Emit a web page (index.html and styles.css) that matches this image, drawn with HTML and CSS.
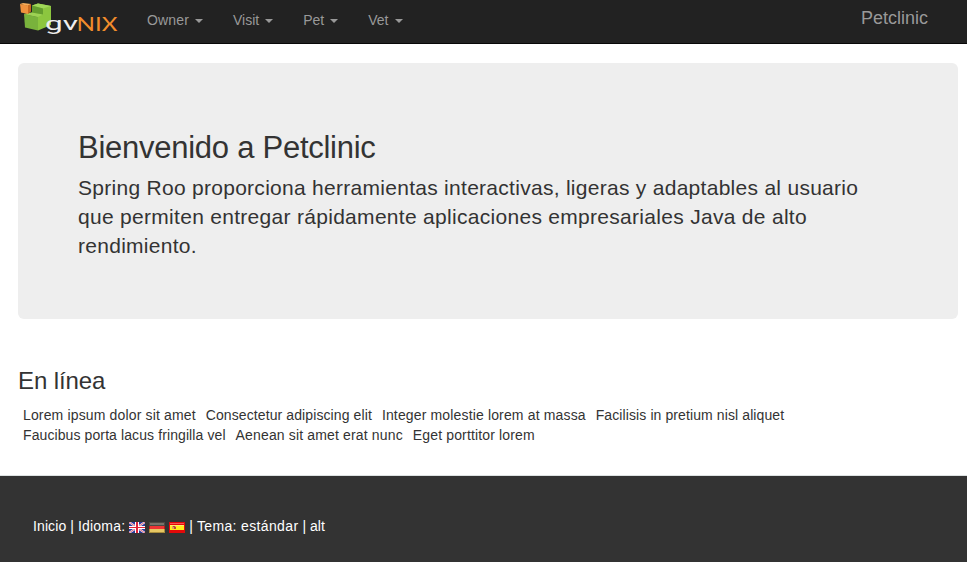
FILE: index.html
```html
<!DOCTYPE html>
<html lang="es">
<head>
<meta charset="utf-8">
<title>Petclinic</title>
<link rel="stylesheet" href="styles.css">
</head>
<body>
<header class="navbar">
  <a class="logo" aria-label="gvNIX">
    <svg width="98" height="36" viewBox="0 0 98 36">
      <path fill="#79b23c" d="M4 14 18 17V30.500L5 27.500Z"/>
      <path fill="#8cc63f" d="M4 14 12 12.500V5.500L18 3.500 31 6V25L18 30.500V17Z"/>
      <path fill="#a0d659" d="M12 5.500 18 3.500 31 6 23 8.500Z"/>
      <path fill="#9dd154" d="M4 14 12 12.500 23 14.500 18 17Z"/>
      <path fill="#649d2e" d="M12 5.500 23 8.500V14.500L12 12.500Z"/>
      <path fill="#f6ad5b" d="M0 4 3 3 11 4 8 6Z"/>
      <path fill="#f0913d" d="M0 4 8 5.500V14L1 12.500Z"/>
      <path fill="#c9691f" d="M8 5.500 11 4V11.500L8 14Z"/>
      <text class="mark mark-light" x="25" y="30" textLength="33" lengthAdjust="spacingAndGlyphs">gv</text>
      <text class="mark mark-orange" x="56.500" y="30.500" textLength="41" lengthAdjust="spacingAndGlyphs">NIX</text>
    </svg>
  </a>
  <nav class="menu">
    <a>Owner<span class="caret"></span></a>
    <a>Visit<span class="caret"></span></a>
    <a>Pet<span class="caret"></span></a>
    <a>Vet<span class="caret"></span></a>
  </nav>
  <a class="brand">Petclinic</a>
</header>
<main class="content">
  <section class="jumbotron">
    <h1>Bienvenido a Petclinic</h1>
    <p><span class="line">Spring Roo proporciona herramientas interactivas, ligeras y adaptables al usuario</span> <span class="line">que permiten entregar rápidamente aplicaciones empresariales Java de alto</span> <span class="line">rendimiento.</span></p>
  </section>
  <h2>En línea</h2>
  <ul class="links">
    <li>Lorem ipsum dolor sit amet</li>
    <li>Consectetur adipiscing elit</li>
    <li>Integer molestie lorem at massa</li>
    <li>Facilisis in pretium nisl aliquet</li>
    <li>Faucibus porta lacus fringilla vel</li>
    <li>Aenean sit amet erat nunc</li>
    <li>Eget porttitor lorem</li>
  </ul>
</main>
<footer class="footer">
  <span class="home">Inicio</span><span class="bar">|</span><span class="lang">Idioma:</span>
  <svg class="flag" width="16" height="11" viewBox="0 0 16 11">
    <path fill="#2b3a9c" d="M0 0h16v11H0z"/>
    <path stroke="#f4eff4" stroke-width="2" d="M0 0 16 11M16 0 0 11"/>
    <path stroke="#dc4960" stroke-width=".8" d="M0 0 16 11M16 0 0 11"/>
    <path fill="#fff" d="M6 0h4v11H6zM0 4h16v3H0z"/>
    <path fill="#e02339" d="M7 0h2v11H7zM0 5h16v1H0z"/>
  </svg>
  <svg class="flag" width="16" height="11" viewBox="0 0 16 11">
    <path fill="#4b4943" d="M0 0h16v4H0z"/>
    <path fill="#b91a17" d="M0 4h16v3H0z"/>
    <path fill="#a98d3c" d="M0 7h16v4H0z"/>
    <path fill="#77736b" d="M1 1h14v2H1z"/>
    <path fill="#ee3434" d="M1 4h14v3H1z"/>
    <path fill="#e6c763" d="M1 7h14v3H1z"/>
  </svg>
  <svg class="flag" width="16" height="11" viewBox="0 0 16 11">
    <path fill="#e30909" d="M0 0h16v11H0z"/>
    <path fill="#f75454" d="M1 1h14v1H1z"/>
    <path fill="#ffed18" d="M1 3h14v5H1z"/>
    <path fill="#fff36d" d="M1 3h14v1H1z"/>
    <path fill="#e4a35a" d="M3 4h4v3H3z"/>
    <path fill="#b9483b" d="M4 4h2v1H4zM5 5h2v2H5z"/>
  </svg>
  <span class="bar">|</span><span class="theme">Tema: estándar</span><span class="bar">|</span><span class="alt">alt</span>
</footer>
</body>
</html>
```
FILE: styles.css
```css
* { box-sizing: border-box; }
body { margin: 0; background: #fff; color: #333; font: 14px/20px "Liberation Sans", Arial, sans-serif; }
.navbar { display: flex; align-items: flex-start; height: 44px; padding: 0 39px 0 20px; background: #222; border-bottom: 1px solid #080808; color: #999; }
.logo { width: 112px; height: 36px; }
.logo svg { display: block; }
.mark { font-family: Roboto, sans-serif; font-size: 18px; }
.mark-light { fill: #eee; }
.mark-orange { fill: #f28d2c; font-family: Lato, sans-serif; font-size: 19px; }
.menu { display: flex; }
.menu a { display: flex; align-items: center; height: 20px; margin-top: 10px; padding: 0 15px; }
.caret { margin: 2px 0 0 6px; border: 4px solid transparent; border-top-color: #999; border-bottom: 0; }
.menu a:first-child { letter-spacing: .15px; }
.menu a:last-child .caret { margin-left: 7px; }
.brand { margin: 8px 0 0 auto; font-size: 18px; }
.content { padding: 19px 9px 0 18px; height: 431px; }
.jumbotron { height: 256px; padding: 66px 60px 0; background: #eee; border-radius: 6px; }
h1, h2, p, ul { margin: 0; padding: 0; font-weight: 400; }
h1 { font-size: 31px; line-height: 38px; letter-spacing: -.26px; }
.jumbotron p { margin-top: 6px; font-size: 21px; line-height: 29px; letter-spacing: .28px; }
.line { display: block; width: max-content; }
.line:nth-child(2) { letter-spacing: .295px; }
h2 { margin-top: 49px; font-size: 24px; line-height: 26px; letter-spacing: -.12px; }
.links { display: flex; flex-wrap: wrap; width: 800px; margin-top: 11px; list-style: none; letter-spacing: .15px; }
.links li { padding: 0 5px; }
.links li:nth-child(2), .links li:nth-child(4), .links li:nth-child(5) { letter-spacing: .1px; }
.footer { display: flex; align-items: flex-start; height: 87px; padding: 40px 33px 0; background: #333; border-top: 1px solid #dde2e2; color: #fff; }
.bar { margin: 0 4px; }
.home { letter-spacing: .1px; }
.lang { letter-spacing: .2px; }
.theme { letter-spacing: .36px; }
.flag { margin: 6px 0 0 4px; }
```
